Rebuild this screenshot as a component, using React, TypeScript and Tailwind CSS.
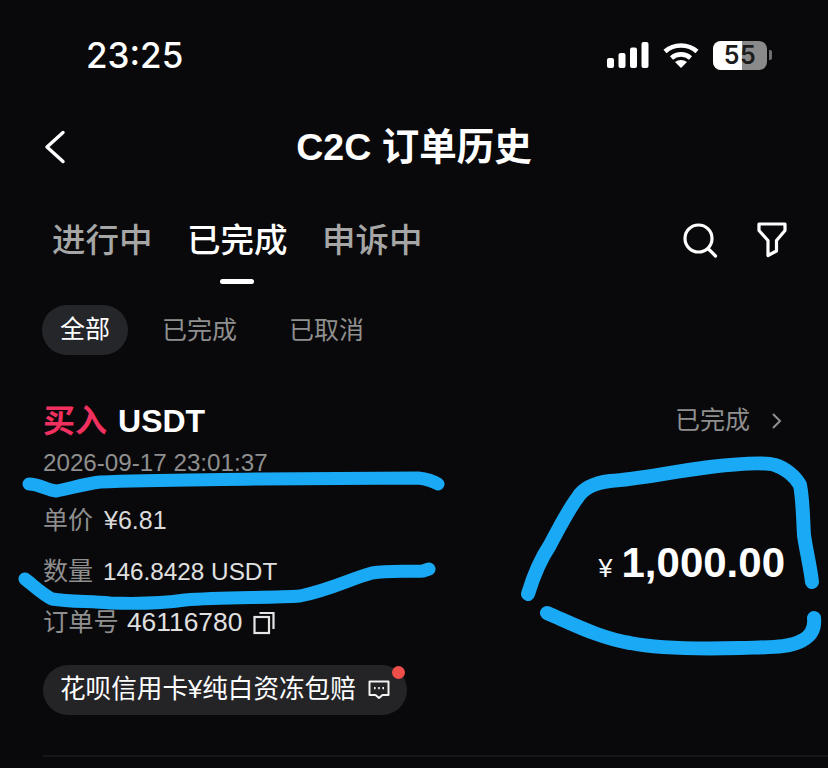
const font = "font-['Liberation_Sans','Noto_Sans_CJK_SC',sans-serif]";

function Signal() {
  return (
    <svg width="42" height="26" viewBox="0 0 42 26" fill="#fff">
      <rect x="0" y="16" width="7" height="10" rx="2" />
      <rect x="11.5" y="11" width="7" height="15" rx="2" />
      <rect x="23" y="5.5" width="7" height="20.5" rx="2" />
      <rect x="34.5" y="0" width="7" height="26" rx="2" />
    </svg>
  );
}

function Wifi() {
  return (
    <svg width="36" height="26" viewBox="0 0 36 26" fill="none" stroke="#fff" strokeWidth="4.6">
      <path d="M2 9.5C11 1.5 25 1.5 34 9.5" />
      <path d="M8.5 16C14 11.2 22 11.2 27.5 16" />
      <path d="M18 26l-6-6c3.4-2.8 8.6-2.8 12 0z" fill="#fff" stroke="none" />
    </svg>
  );
}

function Battery() {
  return (
    <div className="flex items-center gap-[2px]">
      <div className="relative flex h-[29px] w-[54px] items-center justify-center overflow-hidden rounded-[8px] bg-[#8a8a8a]">
        <div className="absolute inset-y-0 left-0 w-[29px] bg-white" />
        <span className="relative text-[25px] font-semibold leading-none tracking-[0.5px] text-[#1c1c1c] font-['Inter',sans-serif]">55</span>
      </div>
      <div className="h-[10px] w-[3px] rounded-r-[2px] bg-[#6e6e6e]" />
    </div>
  );
}

function Scribbles() {
  return (
    <svg className="absolute inset-0" width="828" height="768" viewBox="0 0 828 768" fill="none" stroke="#1aa9f5" strokeLinecap="round" strokeLinejoin="round">
      <path strokeWidth="13" d="M29 484C38 484 48 490 56 491C68 489 84 484 100 482C150 480 200 480 260 479C320 479 380 478 418 478C426 479 433 481 438 484" />
      <path strokeWidth="13" d="M25 579C33 585 42 594 52 599C70 602 90 601 110 603C140 604 165 603 185 600C220 597 270 598 300 596C330 590 350 579 372 573C390 570 410 572 423 571L429 569" />
      <path strokeWidth="14" d="M528 594C534 574 540 560 550 545C558 530 568 510 578 497C584 487 595 483 610 481C640 479 670 472 710 467C735 464 765 462 775 465C785 468 795 476 800 485C803 500 803 520 804 535C806 550 810 565 812 582" />
      <path strokeWidth="14" d="M547 613C575 625 600 638 630 643C660 649 700 649 740 648C770 647 790 648 803 640C812 635 815 627 814 618" />
    </svg>
  );
}

export default function App() {
  return (
    <div className={`relative h-[768px] w-[828px] overflow-hidden bg-[#09090b] text-white ${font}`}>
      {/* Status bar */}
      <div className="flex h-[110px] items-center justify-between pl-[86px] pr-[56px]">
        <span className="text-[35px] font-medium font-['Inter',sans-serif]">23:25</span>
        <div className="flex items-center gap-[14px]">
          <Signal />
          <Wifi />
          <Battery />
        </div>
      </div>

      {/* Title bar */}
      <div className="relative flex h-[74px] items-center justify-center pt-[2px]">
        <svg className="absolute left-[42px] top-[19px]" width="26" height="36" viewBox="0 0 26 36" fill="none" stroke="#fff" strokeWidth="3.4" strokeLinecap="round" strokeLinejoin="round">
          <path d="M21 3.5L5 18l16 14.5" />
        </svg>
        <span className="text-[37.5px] font-bold leading-none">C2C 订单历史</span>
      </div>

      {/* Tabs */}
      <div className="flex h-[121px] items-start justify-between pl-[52px] pr-[41px]">
        <div className="flex gap-[34.5px] pt-[37px]">
          <span className="text-[33.5px] font-medium leading-[40px] text-[#a6a6a6]">进行中</span>
          <span className="relative text-[33.5px] font-medium leading-[40px] text-white">
            已完成
            <span className="absolute left-1/2 top-[58px] h-[5px] w-[34px] -translate-x-1/2 rounded-full bg-white" />
          </span>
          <span className="text-[33.5px] font-medium leading-[40px] text-[#a6a6a6]">申诉中</span>
        </div>
        <div className="flex items-center gap-[39px] pt-[38px]">
          <svg className="-ml-[2px]" width="36" height="36" viewBox="0 0 36 36" fill="none" stroke="#fff" strokeWidth="3.2" strokeLinecap="round">
            <circle cx="16.5" cy="16.5" r="13.5" />
            <path d="M26.5 27l7 7" />
          </svg>
          <svg width="30" height="36" viewBox="0 0 30 36" fill="none" stroke="#fff" strokeWidth="3.2" strokeLinejoin="round">
            <path d="M2 2h26v6.5L19.5 18.5v10.5L11 33.5V18.5L2 8.5z" />
          </svg>
        </div>
      </div>

      {/* Filter chips */}
      <div className="flex items-center pl-[42px]">
        <span className="flex h-[50px] w-[86px] items-center justify-center rounded-[25px] bg-[#25262a] text-[25px]">全部</span>
        <span className="ml-[34px] text-[25px] leading-[50px] text-[#8f8f8f]">已完成</span>
        <span className="ml-[52px] text-[25px] leading-[50px] text-[#8f8f8f]">已取消</span>
      </div>

      {/* Order */}
      <div className="relative mt-[46px] pl-[43px] pr-[46px]">
        <div className="flex h-[40px] items-center justify-between">
          <div className="flex items-center gap-[11px] text-[32px] font-bold leading-none">
            <span className="text-[#f0305f]">买入</span>
            <span>USDT</span>
          </div>
          <div className="flex items-center gap-[21px] text-[#8f8f8f]">
            <span className="text-[25px]">已完成</span>
            <svg width="11" height="18" viewBox="0 0 11 18" fill="none" stroke="#8f8f8f" strokeWidth="2">
              <path d="M2 2l7 7-7 7" />
            </svg>
          </div>
        </div>
        <div className="mt-[8px] text-[24.2px] leading-[28px] text-[#8f8f8f]">2026-09-17 23:01:37</div>
        <div className="mt-[30px] flex h-[28px] items-center gap-[11px]">
          <span className="text-[25px] text-[#8f8f8f]">单价</span>
          <span className="text-[25px] text-[#d9d9d9]">¥6.81</span>
        </div>
        <div className="mt-[23px] flex h-[28px] items-center gap-[10px]">
          <span className="text-[25px] text-[#8f8f8f]">数量</span>
          <span className="text-[24.3px] text-[#e0e0e0]">146.8428 USDT</span>
        </div>
        <div className="mt-[23px] flex h-[28px] items-center gap-[8px]">
          <span className="text-[25.3px] text-[#8f8f8f]">订单号</span>
          <span className="text-[26.4px] text-[#e0e0e0]">46116780</span>
          <svg className="ml-[3px]" width="22" height="24" viewBox="0 0 22 24" fill="none" stroke="#e6e6e6" strokeWidth="2.2">
            <rect x="1.5" y="6" width="14.5" height="16" />
            <path d="M6.5 2h14v16" />
          </svg>
        </div>
        <div className="mt-[28px] flex">
          <div className="relative flex h-[50px] items-center gap-[12px] rounded-[25px] bg-[#242427] pl-[17px] pr-[17px]">
            <span className="text-[25.6px] leading-none text-white">花呗信用卡¥纯白资冻包赔</span>
            <svg width="22" height="20" viewBox="0 0 22 20" fill="none" stroke="#f2f2f2" strokeWidth="2" strokeLinejoin="round">
              <path d="M1.5 1.5h19v13.5h-6l-3.5 3-3.5-3h-6z" />
              <path d="M6 8.2h1.6M10.2 8.2h1.6M14.4 8.2h1.6" strokeWidth="2.2" />
            </svg>
            <span className="absolute right-[2px] top-[1px] h-[13px] w-[13px] rounded-full bg-[#ee4f4a]" />
          </div>
        </div>
        <div className="-mr-[46px] mt-[40px] h-[2px] bg-[#161618]" />

        <div className="absolute right-[43px] top-[138px] flex items-baseline gap-[9px]">
          <span className="text-[25px] font-medium">¥</span>
          <span className="text-[42px] font-bold leading-[48px]">1,000.00</span>
        </div>
      </div>

      <Scribbles />
    </div>
  );
}
